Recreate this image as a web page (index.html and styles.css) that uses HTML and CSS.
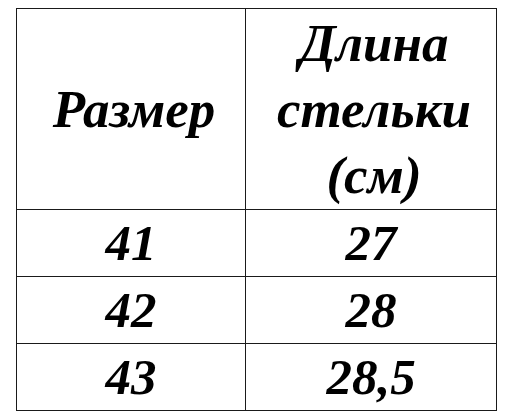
FILE: index.html
```html
<!DOCTYPE html>
<html lang="ru">
<head>
<meta charset="utf-8">
<link rel="stylesheet" href="styles.css">
</head>
<body>
<table class="sizes">
  <colgroup><col class="c1"><col class="c2"></colgroup>
  <thead>
    <tr class="head"><th>Размер</th><th>Длина<br>стельки<br>(см)</th></tr>
  </thead>
  <tbody>
    <tr class="row"><td>41</td><td>27</td></tr>
    <tr class="row"><td>42</td><td>28</td></tr>
    <tr class="row"><td>43</td><td>28,5</td></tr>
  </tbody>
</table>
</body>
</html>
```
FILE: styles.css
```css
html, body { margin: 0; padding: 0; background: #fff; }
body { padding: 8px 0 0 16px; }
.sizes {
  border-collapse: collapse;
  width: 481px;
  table-layout: fixed;
  font-family: "Liberation Serif", "Times New Roman", serif;
  font-weight: bold;
  font-style: italic;
  font-size: 51px;
  line-height: 66px;
  color: #000;
}
.c1 { width: 229px; }
.sizes th, .sizes td {
  border: 1px solid #1a1a1a;
  padding: 0;
  text-align: center;
  vertical-align: middle;
  font-weight: bold;
}
.sizes th { font-size: 53px; padding-left: 6px; }
.head { height: 201px; }
.row { height: 67px; }
```
